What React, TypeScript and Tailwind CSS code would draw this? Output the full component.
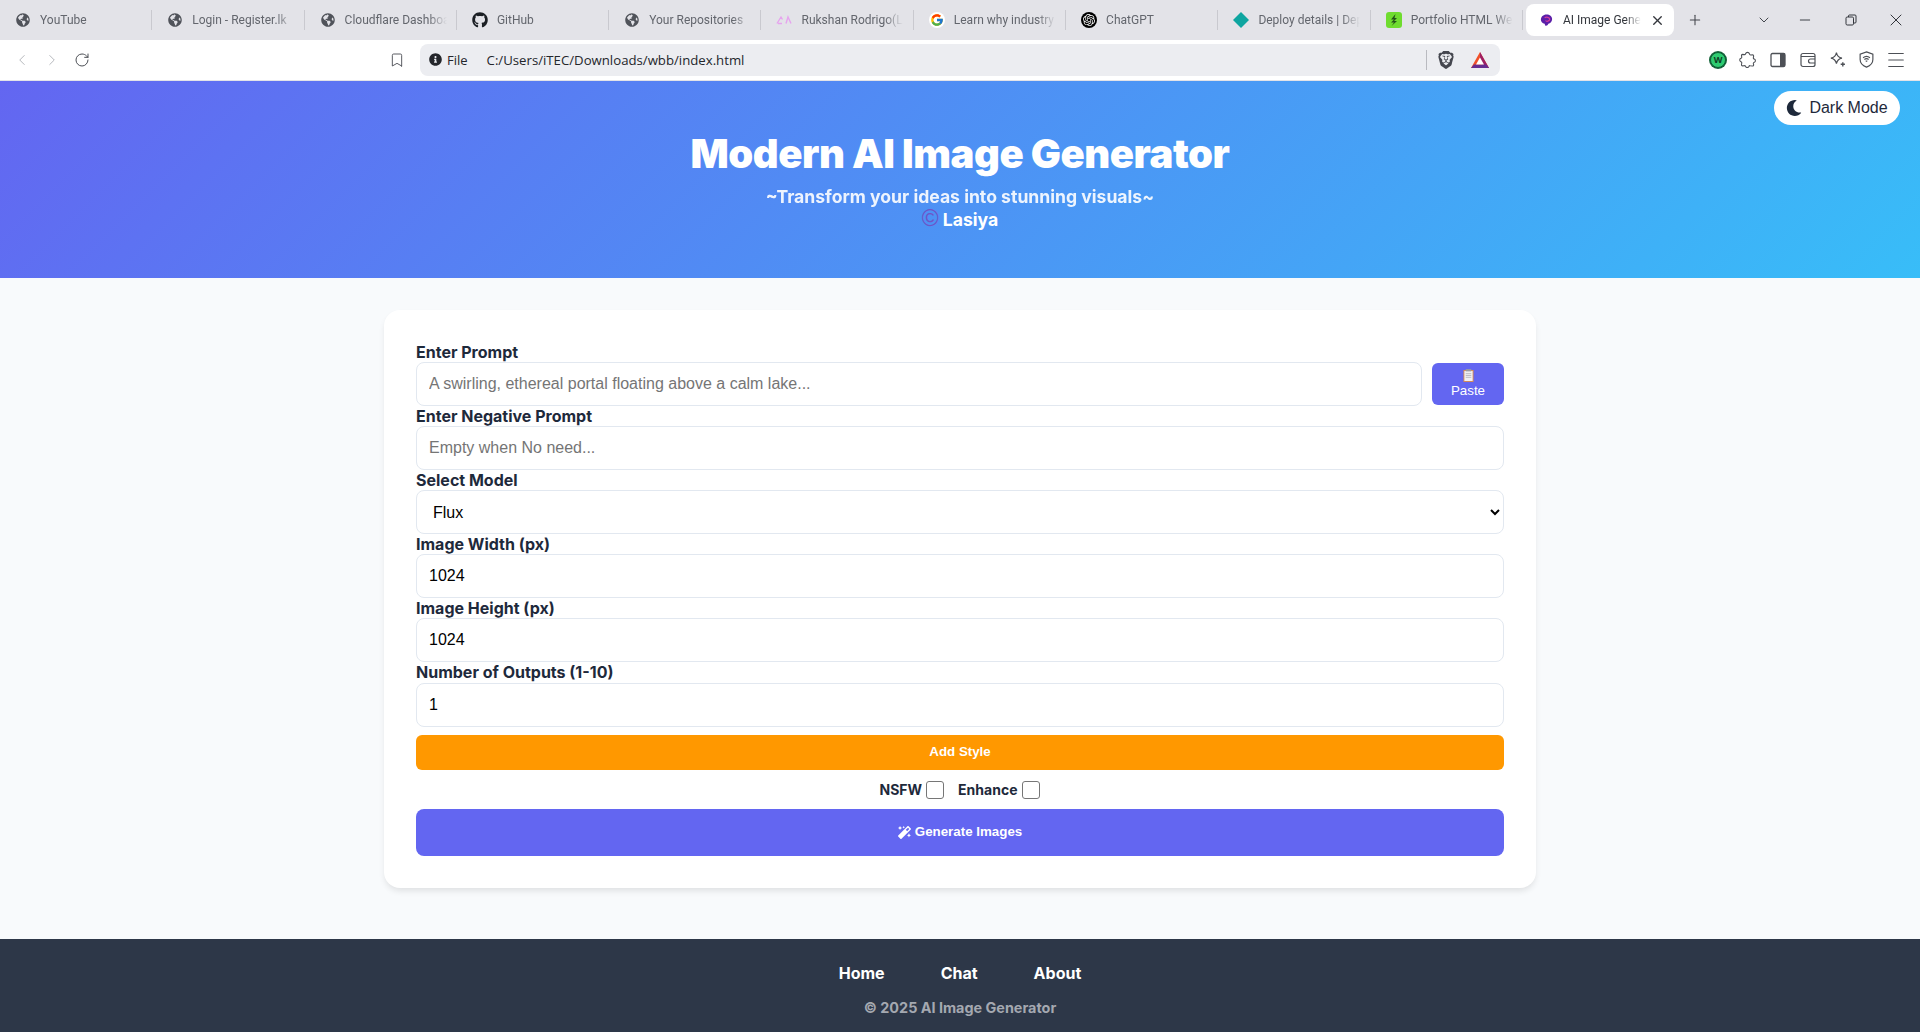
import { ChevronLeft, ChevronRight, RotateCw, Bookmark, Menu, Plus, ChevronDown, Minus, X } from 'lucide-react';
import { FaGlobeAmericas, FaGithub, FaMagic, FaMoon, FaInfoCircle } from 'react-icons/fa';
import { FcGoogle } from 'react-icons/fc';
import { SiOpenai, SiBrave } from 'react-icons/si';
import type { ReactNode } from 'react';

const globe = <FaGlobeAmericas className="h-[14px] w-[14px] text-[#50535a]" />;

const tabs: { title: string; icon: ReactNode }[] = [
  { title: 'YouTube', icon: globe },
  { title: 'Login - Register.lk', icon: globe },
  { title: 'Cloudflare Dashboard', icon: globe },
  { title: 'GitHub', icon: <FaGithub className="h-[16px] w-[16px] text-[#1b1f24]" /> },
  { title: 'Your Repositories', icon: globe },
  {
    title: 'Rukshan Rodrigo(LA)',
    icon: (
      <svg viewBox="0 0 16 16" className="h-4 w-4" fill="none" stroke="#e6a4ee" strokeWidth="1.4">
        <path d="M1 11.5 5 5l1.5 2.5M2 11.5h4M10 11.5 12 5l3 6.5" />
      </svg>
    ),
  },
  { title: 'Learn why industry', icon: <span className="flex h-4 w-4 items-center justify-center rounded-full bg-white"><FcGoogle className="h-[14px] w-[14px]" /></span> },
  { title: 'ChatGPT', icon: <span className="flex h-4 w-4 items-center justify-center rounded-full bg-black"><SiOpenai className="h-3 w-3 text-white" /></span> },
  {
    title: 'Deploy details | Deploy',
    icon: (
      <svg viewBox="0 0 16 16" className="h-4 w-4">
        <path d="M8 0 16 8 8 16 0 8Z" fill="#0ea5a0" />
      </svg>
    ),
  },
  {
    title: 'Portfolio HTML Website',
    icon: (
      <svg viewBox="0 0 16 16" className="h-4 w-4">
        <rect width="16" height="16" rx="3" fill="#6fdc2f" />
        <path d="M9.5 2 5 7.5h3L5 10.5h3L5.5 14 11 9H8l3-3H8.5z" fill="#24521a" />
      </svg>
    ),
  },
];

function Field({ label, children }: { label: string; children: ReactNode }) {
  return (
    <div className="flex flex-col">
      <label className="h-[20.100px] text-[16px] leading-[20px] font-bold text-[#1e293b]">{label}</label>
      {children}
    </div>
  );
}

const inputClass =
  "h-[44px] w-full rounded-lg border border-[#e2e8f0] bg-white px-3 font-['Liberation_Sans',sans-serif] text-[16px] text-black placeholder:text-[#757575] outline-none";

export default function App() {
  return (
    <div className="flex min-h-[1032px] flex-col bg-[#f8fafc] font-['Inter',sans-serif]">
      {/* Browser tabs */}
      <div className="flex h-[40px] items-center overflow-hidden bg-[#e3e3e8] font-['Roboto',sans-serif] text-[12px] text-[#63666d]">
        {tabs.map((tab) => (
          <div key={tab.title} className="flex h-[32px] w-[152.300px] shrink-0 items-center pl-[15px]">
            <span className="flex w-[16px] shrink-0 justify-center">{tab.icon}</span>
            <span className="ml-[9px] w-[102px] overflow-hidden whitespace-nowrap [mask-image:linear-gradient(to_right,black_82%,transparent)]">
              {tab.title}
            </span>
            <span className="ml-auto h-[20px] w-px bg-[#c9c9cf]" />
          </div>
        ))}
        <div className="ml-[3px] flex h-[32px] w-[148px] shrink-0 items-center rounded-lg bg-white pl-[13px] text-[#33363c]">
          <svg viewBox="0 0 16 16" className="h-[15px] w-[15px] shrink-0">
            <path d="M8 1.5c3.5 0 6 2 6 5 0 3-2 4.5-4 5-.5 1.500-2 2.500-3 2-1-.5-.5-1.500-1-2C3.500 11 2 9.500 2 7c0-3 2.500-5.500 6-5.500Z" fill="#5b1fa8" />
            <path d="M6 5c2-1 5-.5 5.500 1.500C11 9 8 9.500 7 8" fill="none" stroke="#d63ca0" strokeWidth="1.300" />
          </svg>
          <span className="ml-[9px] w-[78px] overflow-hidden whitespace-nowrap [mask-image:linear-gradient(to_right,black_80%,transparent)]">AI Image Generator</span>
          <X className="ml-[9px] h-[15px] w-[15px] text-[#33363c]" strokeWidth={2.2} />
        </div>
        <Plus className="ml-[13px] h-[16px] w-[16px] shrink-0 text-[#44474d]" strokeWidth={1.6} />
        <ChevronDown className="ml-[53.500px] h-[16px] w-[16px] shrink-0 text-[#44474d]" strokeWidth={1.5} />
        <Minus className="ml-[24.500px] h-[16px] w-[16px] shrink-0 text-[#33363c]" strokeWidth={1.4} />
        <svg viewBox="0 0 12 12" className="ml-[32px] h-[12px] w-[12px] shrink-0" fill="none" stroke="#33363c" strokeWidth="1">
          <rect x="1" y="3" width="7.500" height="8" rx="1.200" />
          <path d="M3.500 3V2a1 1 0 0 1 1-1H10a1 1 0 0 1 1 1v6a1 1 0 0 1-1 1H8.500" />
        </svg>
        <X className="ml-[29px] h-[20px] w-[20px] shrink-0 text-[#33363c]" strokeWidth={1.2} />
      </div>

      {/* Browser toolbar */}
      <div className="flex h-[41px] items-center border-b border-[#e3e3e8] bg-white pb-px font-['Open_Sans',sans-serif]">
        <ChevronLeft className="ml-[13px] h-[18px] w-[18px] text-[#b4b6bb]" strokeWidth={1.3} />
        <ChevronRight className="ml-[12px] h-[18px] w-[18px] text-[#b4b6bb]" strokeWidth={1.3} />
        <RotateCw className="ml-[13px] h-[16px] w-[16px] text-[#4d5056]" strokeWidth={1.5} />
        <Bookmark className="ml-[299px] h-[16px] w-[16px] text-[#4d5056]" strokeWidth={1.4} />
        <div className="ml-[15px] flex h-[32px] w-[1080px] items-center rounded-lg bg-[#ecedf1] pl-[9px] text-[#24262b]">
          <FaInfoCircle className="h-[13px] w-[13px] text-[#24262b]" />
          <span className="ml-[5px] pt-px text-[13px] leading-[20px]">File</span>
          <span className="ml-[19px] pt-px text-[13.200px] leading-[20px]">C:/Users/iTEC/Downloads/wbb/index.html</span>
          <span className="ml-auto h-[20px] w-px bg-[#b9bac0]" />
          <SiBrave className="ml-[10px] h-[18px] w-[18px] text-[#45474f]" />
          <svg viewBox="0 0 18 16" className="mr-[11px] ml-[16px] h-[16px] w-[18px]">
            <path d="M9 0 18 16H0Z" fill="#f0502a" />
            <path d="M9 0 18 16h-5L9 8Z" fill="#9e1f63" />
            <path d="M0 16h18l-3-3.500H3Z" fill="#662d91" />
            <path d="M9 5.500 13 12.500H5Z" fill="#fff" />
          </svg>
        </div>
        <span className="ml-[210px] flex h-[16px] w-[16px] items-center justify-center rounded-full border border-[#0f5c36] bg-[#2ecc71] text-[9px] font-bold text-[#0d3d24] ring-1 ring-[#14643a]">
          W
        </span>
        <svg viewBox="0 0 16 16" className="ml-[13px] h-[17px] w-[17px]" fill="none" stroke="#4d5056" strokeWidth="1">
          <path d="M6.200 2.600a1.900 1.900 0 0 1 3.600 0c.1.800.6 1.300 1.400 1.200l1.600-.2c.6 0 1 .4 1 1l-.3 1.900c-.1.600.4 1 .9 1.100a1.600 1.600 0 0 1 0 3c-.5.2-1 .5-.9 1.100l.3 1.400c0 .6-.4 1-1 1l-2.300-.3c-.6-.1-1 .3-1.200.8a1.700 1.700 0 0 1-3.100 0c-.2-.5-.6-.9-1.200-.8l-1.700.2c-.6 0-1-.4-1-1l.3-1.700c.1-.6-.3-1-.8-1.200a1.700 1.700 0 0 1 0-3.200c.5-.2.9-.6.8-1.200l-.3-1.500c0-.6.4-1 1-1l1.500.2c.8.1 1.300-.4 1.400-1Z" />
        </svg>
        <svg viewBox="0 0 16 16" className="ml-[14px] h-[16px] w-[16px]">
          <rect x="1" y="1.500" width="14" height="13" rx="1.500" fill="none" stroke="#4d5056" strokeWidth="1.300" />
          <rect x="10" y="1.500" width="5" height="13" fill="#4d5056" />
        </svg>
        <svg viewBox="0 0 16 16" className="ml-[14px] h-[16px] w-[16px]" fill="none" stroke="#4d5056" strokeWidth="1.200">
          <rect x="1" y="1.500" width="14" height="13" rx="2" />
          <path d="M1 4.500h14M15 7h-4.500a1.500 1.500 0 0 0 0 4H15" />
        </svg>
        <svg viewBox="0 0 16 16" className="ml-[13px] h-[17px] w-[17px]" fill="none" stroke="#4d5056" strokeWidth="1.100">
          <path d="M7 1.500c.6 3.200 2 4.600 5.200 5.200-3.200.6-4.600 2-5.200 5.200-.6-3.200-2-4.600-5.200-5.200C5 6.100 6.400 4.700 7 1.500Z" />
          <path d="M13 10.500v4M11 12.500h4" strokeWidth="1.300" />
        </svg>
        <svg viewBox="0 0 16 16" className="ml-[12px] h-[17px] w-[17px]" fill="none" stroke="#4d5056" strokeWidth="1.100">
          <path d="M8 .8 14 3v5c0 3.500-3 6-6 7.200C5 14 2 11.500 2 8V3Z" />
          <path d="M4.800 6.300c1.800-1.500 4.600-1.500 6.400 0M6 8c1.200-.9 2.800-.9 4 0M7.200 9.700c.5-.3 1.100-.3 1.600 0" />
        </svg>
        <Menu className="ml-[10px] h-[22px] w-[22px] text-[#4d5056]" strokeWidth={1.1} />
      </div>

      {/* Page header */}
      <header className="relative bg-[linear-gradient(135deg,#6366f1,#38bdf8)] pt-[49px] pb-[47px] text-center text-white">
        <button className="absolute top-[10px] right-[20px] flex h-[34px] w-[126px] items-center justify-center gap-[7px] rounded-full bg-white font-['Liberation_Sans',sans-serif] text-[16px] text-[#1e293b]">
          <FaMoon className="h-[16px] w-[16px]" />
          Dark Mode
        </button>
        <h1 className="mb-[7px] text-[40px] leading-[48px] font-black tracking-[-0.450px]">Modern AI Image Generator</h1>
        <p className="text-[17.600px] leading-[23px] font-bold opacity-90">~Transform your ideas into stunning visuals~</p>
        <p className="h-[23px] text-[17.600px] leading-[23px] font-bold">
          <span className="font-['Liberation_Sans',sans-serif] text-[23px] leading-[0] font-normal text-[#6d55c8]">©</span> Lasiya
        </p>
      </header>

      {/* Form card */}
      <main className="mx-auto mt-[32px] mb-[51px] w-[1152px] rounded-2xl bg-white p-[32px] shadow-[0_4px_6px_-1px_rgba(0,0,0,0.1)]">
        <Field label="Enter Prompt">
          <div className="flex items-center gap-[10px]">
            <input className={inputClass} placeholder="A swirling, ethereal portal floating above a calm lake..." />
            <button className="flex h-[42px] w-[72px] shrink-0 flex-col items-center justify-center rounded-md bg-[#6366f1] font-['Liberation_Sans',sans-serif] text-[13.333px] leading-[17px] text-white">
              <svg viewBox="0 0 12 14" className="h-[13px] w-[11px]">
                <rect x="0.500" y="1" width="11" height="13" fill="#d98d4f" />
                <rect x="1.500" y="2" width="9" height="11" fill="#f1f0f3" />
                <rect x="3" y="0" width="6" height="2.500" fill="#9a9aa3" />
                <path d="M3 5h6M3 7h6M3 9h6" stroke="#b8b8c0" />
              </svg>
              Paste
            </button>
          </div>
        </Field>
        <Field label="Enter Negative Prompt">
          <input className={inputClass} placeholder="Empty when No need..." />
        </Field>
        <Field label="Select Model">
          <select className={inputClass} defaultValue="Flux">
            <option>Flux</option>
          </select>
        </Field>
        <Field label="Image Width (px)">
          <input className={inputClass} type="number" defaultValue={1024} />
        </Field>
        <Field label="Image Height (px)">
          <input className={inputClass} type="number" defaultValue={1024} />
        </Field>
        <Field label="Number of Outputs (1-10)">
          <input className={inputClass} type="number" defaultValue={1} />
        </Field>

        <button className="mt-[8px] h-[35px] w-full rounded-md bg-[#ff9800] font-['Liberation_Sans',sans-serif] text-[13.333px] font-bold text-white">
          Add Style
        </button>

        <div className="mt-[11px] flex h-[18px] items-center justify-center gap-[14px] text-[14px] font-bold text-[#1e293b]">
          <label className="flex items-center gap-[4px]">
            NSFW
            <input type="checkbox" className="h-[18px] w-[18px] appearance-none rounded-[3px] border border-[#767676] bg-white" />
          </label>
          <label className="flex items-center gap-[5px]">
            Enhance
            <input type="checkbox" className="h-[18px] w-[18px] appearance-none rounded-[3px] border border-[#767676] bg-white" />
          </label>
        </div>

        <button className="mt-[10px] flex h-[47px] w-full items-center justify-center gap-[4px] rounded-lg bg-[#6366f1] font-['Liberation_Sans',sans-serif] text-[13.333px] font-bold text-white">
          <FaMagic className="h-[13px] w-[13px]" />
          Generate Images
        </button>
      </main>

      {/* Footer */}
      <footer className="mt-auto bg-[#2d3748] pt-[22px] pb-[14px] text-center">
        <nav className="flex justify-center gap-[56px] text-[16px] font-bold text-white">
          <a>Home</a>
          <a>Chat</a>
          <a>About</a>
        </nav>
        <p className="mt-[12px] text-[14.400px] leading-[21px] font-bold text-[#a4a8b0]">© 2025 AI Image Generator</p>
      </footer>
    </div>
  );
}
